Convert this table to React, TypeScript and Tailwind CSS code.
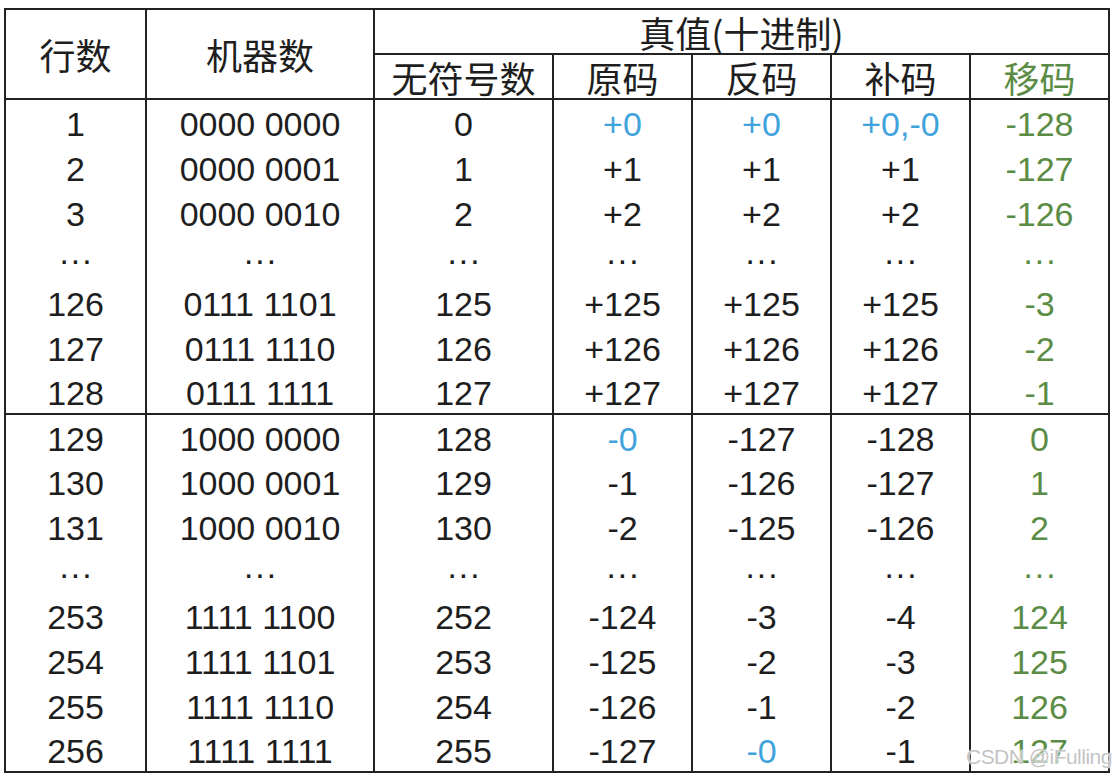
type Cell = { v: string; c?: "blue" | "green" };

const top: Cell[][] = [
  [{ v: "1" }, { v: "0000 0000" }, { v: "0" }, { v: "+0", c: "blue" }, { v: "+0", c: "blue" }, { v: "+0,-0", c: "blue" }, { v: "-128", c: "green" }],
  [{ v: "2" }, { v: "0000 0001" }, { v: "1" }, { v: "+1" }, { v: "+1" }, { v: "+1" }, { v: "-127", c: "green" }],
  [{ v: "3" }, { v: "0000 0010" }, { v: "2" }, { v: "+2" }, { v: "+2" }, { v: "+2" }, { v: "-126", c: "green" }],
  [{ v: "···" }, { v: "···" }, { v: "···" }, { v: "···" }, { v: "···" }, { v: "···" }, { v: "···", c: "green" }],
  [{ v: "126" }, { v: "0111 1101" }, { v: "125" }, { v: "+125" }, { v: "+125" }, { v: "+125" }, { v: "-3", c: "green" }],
  [{ v: "127" }, { v: "0111 1110" }, { v: "126" }, { v: "+126" }, { v: "+126" }, { v: "+126" }, { v: "-2", c: "green" }],
  [{ v: "128" }, { v: "0111 1111" }, { v: "127" }, { v: "+127" }, { v: "+127" }, { v: "+127" }, { v: "-1", c: "green" }],
];

const bottom: Cell[][] = [
  [{ v: "129" }, { v: "1000 0000" }, { v: "128" }, { v: "-0", c: "blue" }, { v: "-127" }, { v: "-128" }, { v: "0", c: "green" }],
  [{ v: "130" }, { v: "1000 0001" }, { v: "129" }, { v: "-1" }, { v: "-126" }, { v: "-127" }, { v: "1", c: "green" }],
  [{ v: "131" }, { v: "1000 0010" }, { v: "130" }, { v: "-2" }, { v: "-125" }, { v: "-126" }, { v: "2", c: "green" }],
  [{ v: "···" }, { v: "···" }, { v: "···" }, { v: "···" }, { v: "···" }, { v: "···" }, { v: "···", c: "green" }],
  [{ v: "253" }, { v: "1111 1100" }, { v: "252" }, { v: "-124" }, { v: "-3" }, { v: "-4" }, { v: "124", c: "green" }],
  [{ v: "254" }, { v: "1111 1101" }, { v: "253" }, { v: "-125" }, { v: "-2" }, { v: "-3" }, { v: "125", c: "green" }],
  [{ v: "255" }, { v: "1111 1110" }, { v: "254" }, { v: "-126" }, { v: "-1" }, { v: "-2" }, { v: "126", c: "green" }],
  [{ v: "256" }, { v: "1111 1111" }, { v: "255" }, { v: "-127" }, { v: "-0", c: "blue" }, { v: "-1" }, { v: "127", c: "green" }],
];

const colorOf = (c?: string) =>
  c === "blue" ? "text-[#3fa3dc]" : c === "green" ? "text-[#5b8c45]" : "text-[#1e1e1e]";

function Row({ cells, first, h }: { cells: Cell[]; first?: boolean; h: string }) {
  return (
    <tr className={`${h} ${first ? "border-t-2 border-[#222]" : ""}`}>
      {cells.map((cell, i) => (
        <td
          key={i}
          className={`border-x-2 border-[#222] p-0 text-center align-middle leading-none ${colorOf(cell.c)}`}
        >
          <span className="relative top-[2px]">{cell.v}</span>
        </td>
      ))}
    </tr>
  );
}

export default function App() {
  return (
    <div
      className="relative w-[1116px] h-[780px] bg-white overflow-hidden"
      style={{ fontFamily: '"Liberation Sans", "Noto Sans CJK SC", sans-serif' }}
    >
      <div className="pt-[8px] pl-[4px]">
        <table className="table-fixed border-collapse border-2 border-[#222] text-[34px] w-[1104px]">
          <colgroup>
            <col className="w-[141px]" />
            <col className="w-[228px]" />
            <col className="w-[179px]" />
            <col className="w-[139px]" />
            <col className="w-[139px]" />
            <col className="w-[139px]" />
            <col className="w-[139px]" />
          </colgroup>
          <thead className="text-[#1e1e1e] text-[36px]" style={{ fontFamily: '"Noto Sans CJK SC", sans-serif' }}>
            <tr className="h-[45px]">
              <th rowSpan={2} className="border-2 border-[#222] font-normal p-0 leading-[40px]">行数</th>
              <th rowSpan={2} className="border-2 border-[#222] font-normal p-0 leading-[40px]">机器数</th>
              <th colSpan={5} className="border-2 border-[#222] font-normal p-0 leading-[40px]">真值(十进制)</th>
            </tr>
            <tr className="h-[45px]">
              <th className="border-2 border-[#222] font-normal p-0 leading-[40px]">无符号数</th>
              <th className="border-2 border-[#222] font-normal p-0 leading-[40px]">原码</th>
              <th className="border-2 border-[#222] font-normal p-0 leading-[40px]">反码</th>
              <th className="border-2 border-[#222] font-normal p-0 leading-[40px]">补码</th>
              <th className="border-2 border-[#222] font-normal p-0 leading-[40px] text-[#5b8c45]">移码</th>
            </tr>
          </thead>
          <tbody>
            {top.map((r, i) => (
              <Row key={i} cells={r} first={i === 0} h="h-[45px]" />
            ))}
            {bottom.map((r, i) => (
              <Row key={i} cells={r} first={i === 0} h="h-[44.75px]" />
            ))}
          </tbody>
        </table>
      </div>
      <div
        className="absolute left-[966px] top-[741px] text-[21px] text-[#c4c4c4] tracking-tight"
        style={{ textShadow: "0 0 2px #fff, 0 0 2px #fff" }}
      >
        CSDN @iFulling
      </div>
    </div>
  );
}
